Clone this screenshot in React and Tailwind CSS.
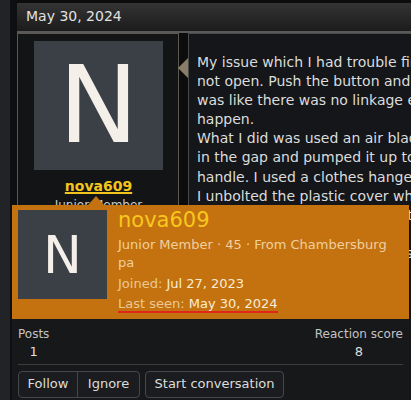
import React from "react";

const messageLines = [
  "My issue which I had trouble finding was that the door would",
  "not open. Push the button and nothing would happen. It",
  "was like there was no linkage even though I could see it",
  "happen.",
  "What I did was used an air bladder wedge. I slipped it",
  "in the gap and pumped it up to get to the inside door",
  "handle. I used a clothes hanger to pull it open. Then",
  "I unbolted the plastic cover which gave me access to the",
  "latch assembly and the cable that runs to the handle and",
  "found the clip had popped off. I put it back on and the",
  "door works fine now. Hope this helps someone else out",
  "with the same problem.",
];

function Avatar({ size, fontSize, className = "" }) {
  return (
    <div
      className={`flex shrink-0 items-center justify-center bg-[#3a4045] text-[#f4efe9] ${size} ${fontSize} ${className}`}
      style={{ lineHeight: 1 }}
    >
      N
    </div>
  );
}

function MemberTooltip() {
  return (
    <div className="absolute left-[12px] top-[205px] z-10 w-[397px]">
      {/* pointer toward the username */}
      <div className="absolute -top-[9px] left-[76px] h-0 w-0 border-x-[8px] border-b-[9px] border-x-transparent border-b-[#c3720f]" />

      <div className="flex bg-[#c3720f] pb-[5px] pl-[6px] pt-[5px]">
        <Avatar size="h-[89px] w-[89px]" fontSize="text-[52px]" />
        <div className="ml-[11px] flex flex-col">
          <div className="text-[21px] leading-[21px] text-[#f8c71d]">nova609</div>
          <div className="mt-[4.5px] text-[13px] leading-[18px] text-[#f0cf9f]">
            Junior Member · 45 · From Chambersburg
            <br />
            pa
          </div>
          <div className="mt-[2px] text-[13px] leading-[20px]">
            <div>
              <span className="text-[#ecc893]">Joined: </span>
              <span className="text-[#fcebd3]">Jul 27, 2023</span>
            </div>
            <div>
              <span className="border-b-2 border-[#e0251b]">
                <span className="text-[#ecc893]">Last seen: </span>
                <span className="text-[#fcebd3]">May 30, 2024</span>
              </span>
            </div>
          </div>
        </div>
      </div>

      <div className="bg-[#17181a] px-[6px] pb-[10px] pt-[7px]">
        <div className="flex justify-between">
          <div className="flex flex-col items-center">
            <span className="text-[12px] leading-[16px] text-[#c4c4c4]">Posts</span>
            <span className="mt-[1.5px] text-[13px] leading-[17px] text-[#dedede]">1</span>
          </div>
          <div className="flex flex-col items-center">
            <span className="text-[12px] leading-[16px] text-[#c4c4c4]">Reaction score</span>
            <span className="mt-[1.5px] text-[13px] leading-[17px] text-[#dedede]">8</span>
          </div>
        </div>
        <div className="mt-[3.5px] h-px bg-[#3b3c3f]" />
        <div className="mt-[6px] flex gap-[5px] text-[13px] text-[#dcdcdc]">
          <div className="flex h-[27px] overflow-hidden rounded-[4px] border border-[#45474a] bg-[#1b1c1f]">
            <div className="flex w-[59px] items-center justify-center border-r border-[#45474a]">
              Follow
            </div>
            <div className="flex w-[61px] items-center justify-center">Ignore</div>
          </div>
          <div className="flex h-[27px] w-[139px] items-center justify-center rounded-[4px] border border-[#45474a] bg-[#1b1c1f]">
            Start conversation
          </div>
        </div>
      </div>
    </div>
  );
}

export default function App() {
  return (
    <div
      className="relative flex h-[400px] w-[411px] overflow-hidden bg-[#202225]"
      style={{ fontFamily: '"DejaVu Sans", Verdana, sans-serif' }}
    >
      <div className="w-[10px] shrink-0 bg-[#212326]" />
      <div className="w-[7px] shrink-0 bg-[#0e0f10]" />

      <div className="flex min-w-0 flex-1 flex-col bg-[#0c0c0d] pt-[3px]">
        {/* post date bar */}
        <div className="flex h-[30px] shrink-0 items-center border-b-2 border-[#595959] bg-gradient-to-b from-[#343434] to-[#1c1c1c] pb-[2px] pl-[9px]">
          <span className="whitespace-nowrap text-[14px] text-[#e2e2e2]">May 30, 2024</span>
        </div>

        <div className="flex flex-1">
          {/* author column */}
          <div className="flex w-[162px] shrink-0 flex-col border-x border-t border-[#5c5750] bg-[#121416] pt-[7px]">
            <Avatar size="h-[129px] w-[129px]" fontSize="text-[107px]" className="ml-[16px]" />
            <div className="ml-[16px] mt-[8px] w-[129px] text-center">
              <div className="text-[14px] font-bold leading-[17px] text-[#f2c51c] underline decoration-[1.5px] underline-offset-[1px]">
                nova609
              </div>
              <div className="mt-[3px] text-[12px] leading-[15px] text-[#c9c9c9]">Junior Member</div>
            </div>
          </div>

          <div className="w-[9px] shrink-0 bg-[#0c0c0d]" />

          {/* message body */}
          <div className="relative min-w-0 flex-1 border-l border-t border-[#4a4a4a] bg-[#141619]">
            <div className="absolute -left-[11px] top-[24px] h-0 w-0 border-y-[10px] border-r-[10px] border-y-transparent border-r-[#8a7c68]" />
            <div className="overflow-hidden pl-[8px] pt-[19px] text-[14px] leading-[19.1px] text-[#dcdcdc]">
              {messageLines.map((line, i) => (
                <div key={i} className="whitespace-nowrap">
                  {line}
                </div>
              ))}
            </div>
          </div>
        </div>
      </div>

      <MemberTooltip />
    </div>
  );
}
